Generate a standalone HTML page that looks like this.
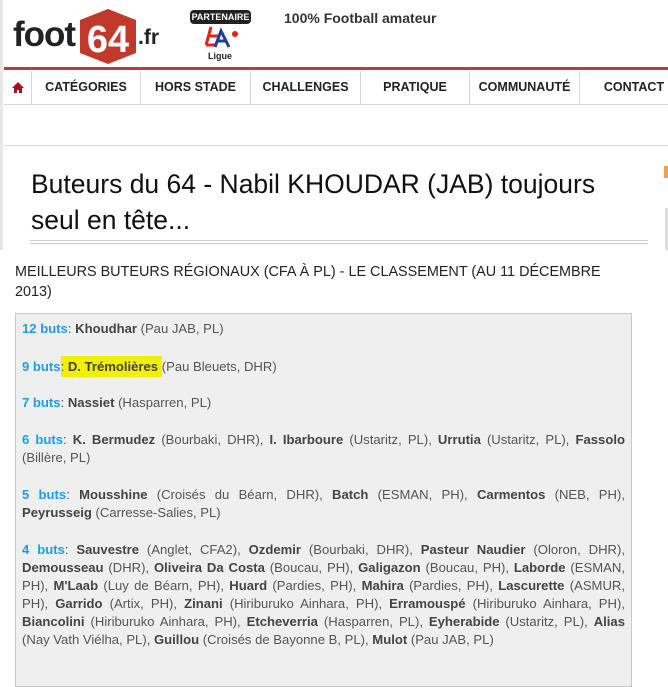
<!DOCTYPE html>
<html><head><meta charset="utf-8"><style>
body{margin:0;width:668px;height:656px;overflow:hidden;background:#fff;font-family:"Liberation Sans",Arial,sans-serif;position:relative}
.abs{position:absolute}
.nav div{position:absolute;top:71px;height:33px;line-height:33px;text-align:center;font-weight:bold;font-size:12.5px;color:#222;border-right:1px solid #d6d6d6}
.box{position:absolute;left:15px;top:313px;width:603px;height:360px;background:#efefef;border:1px solid #c8c8c8;padding:6px 6px;font-size:13.1px;line-height:18px;color:#555;text-align:justify}
.box p{margin:0 0 19px}
.n{color:#1a9ee8;font-weight:bold}
b{color:#444}
</style></head><body>
<div class="abs" style="left:0;top:0;width:3px;height:250px;background:#e8e8e8"></div>
<div class="abs" style="left:13px;top:15px;font-size:35px;font-weight:bold;color:#222;letter-spacing:-1px">foot</div>
<svg class="abs" style="left:80px;top:9px" width="56" height="55"><polygon points="28,0 56,11 56,44 28,55 0,44 0,11" fill="#c0392b"/><text x="28" y="43" text-anchor="middle" font-family="Liberation Sans" font-weight="bold" font-size="38" fill="#fff">64</text></svg>
<div class="abs" style="left:138px;top:26px;font-size:21px;font-weight:bold;color:#222">.fr</div>
<div class="abs" style="left:190px;top:10px;width:61px;height:14px;background:#222;border-radius:4px;color:#fff;font-size:9px;font-weight:bold;text-align:center;line-height:14px">PARTENAIRE</div>
<svg class="abs" style="left:203px;top:25px" width="36" height="26"><path d="M8 2 L3 20 M3 20 L14 20 M6 11 L16 11" stroke="#e2231a" stroke-width="3" fill="none"/><path d="M12 22 L18 6 L26 22 M15 16 L24 16" stroke="#1d3f9a" stroke-width="3" fill="none"/><circle cx="32" cy="9" r="3" fill="#e2231a"/></svg>
<div class="abs" style="left:208px;top:51px;font-size:9px;font-weight:bold;color:#222">Ligue</div>
<div class="abs" style="left:284px;top:10px;font-size:14px;font-weight:bold;color:#333">100% Football amateur</div>
<div class="abs" style="left:4px;top:67px;width:664px;height:3px;background:#c0393b"></div>
<div class="nav">
<div style="left:4px;width:27px"><svg width="12" height="11" style="vertical-align:middle"><path d="M6 0 L12 6 L10 6 L10 11 L7 11 L7 8 L5 8 L5 11 L2 11 L2 6 L0 6 Z" fill="#a0141e"/></svg></div>
<div style="left:32px;width:108px">CATÉGORIES</div>
<div style="left:141px;width:109px">HORS STADE</div>
<div style="left:251px;width:109px">CHALLENGES</div>
<div style="left:361px;width:108px">PRATIQUE</div>
<div style="left:470px;width:109px">COMMUNAUTÉ</div>
<div style="left:580px;width:108px;border:0">CONTACT</div>
</div>
<div class="abs" style="left:4px;top:104px;width:664px;height:1px;background:#d6d6d6"></div>
<div class="abs" style="left:4px;top:145px;width:664px;height:1px;background:#ddd"></div>
<div class="abs" style="left:31px;top:166px;font-size:26.5px;line-height:36px;color:#111;width:620px">Buteurs du 64 - Nabil KHOUDAR (JAB) toujours seul en tête...</div>
<div class="abs" style="left:30px;top:240px;width:618px;height:1px;background:#ccc"></div>
<div class="abs" style="left:30px;top:243px;width:618px;height:1px;background:#ccc"></div>
<div class="abs" style="left:664px;top:166px;width:4px;height:12px;background:#e8a060"></div>
<div class="abs" style="left:665px;top:208px;width:3px;height:42px;background:#ddd"></div>
<div class="abs" style="left:15px;top:262px;font-size:14.4px;line-height:20px;color:#222;width:610px">MEILLEURS BUTEURS RÉGIONAUX (CFA À PL) - LE CLASSEMENT (AU 11 DÉCEMBRE 2013)</div>
<div class="box">
<p><span class="n">12 buts</span>: <b>Khoudhar</b> (Pau JAB, PL)</p>
<p style="margin-bottom:18px;margin-top:20px"><span class="n">9 buts</span><span style="background:#f0f000;padding:3px 0">: <b>D. Trémolières</b> </span>(Pau Bleuets, DHR)</p>
<p><span class="n">7 buts</span>: <b>Nassiet</b> (Hasparren, PL)</p>
<p><span class="n">6 buts</span>: <b>K. Bermudez</b> (Bourbaki, DHR), <b>I. Ibarboure</b> (Ustaritz, PL), <b>Urrutia</b> (Ustaritz, PL), <b>Fassolo</b> (Billère, PL)</p>
<p><span class="n">5 buts</span>: <b>Mousshine</b> (Croisés du Béarn, DHR), <b>Batch</b> (ESMAN, PH), <b>Carmentos</b> (NEB, PH), <b>Peyrusseig</b> (Carresse-Salies, PL)</p>
<p><span class="n">4 buts</span>: <b>Sauvestre</b> (Anglet, CFA2), <b>Ozdemir</b> (Bourbaki, DHR), <b>Pasteur Naudier</b> (Oloron, DHR), <b>Demousseau</b> (DHR), <b>Oliveira Da Costa</b> (Boucau, PH), <b>Galigazon</b> (Boucau, PH), <b>Laborde</b> (ESMAN, PH), <b>M'Laab</b> (Luy de Béarn, PH), <b>Huard</b> (Pardies, PH), <b>Mahira</b> (Pardies, PH), <b>Lascurette</b> (ASMUR, PH), <b>Garrido</b> (Artix, PH), <b>Zinani</b> (Hiriburuko Ainhara, PH), <b>Erramouspé</b> (Hiriburuko Ainhara, PH), <b>Biancolini</b> (Hiriburuko Ainhara, PH), <b>Etcheverria</b> (Hasparren, PL), <b>Eyherabide</b> (Ustaritz, PL), <b>Alias</b> (Nay Vath Viélha, PL), <b>Guillou</b> (Croisés de Bayonne B, PL), <b>Mulot</b> (Pau JAB, PL)</p>
</div>
</body></html>
